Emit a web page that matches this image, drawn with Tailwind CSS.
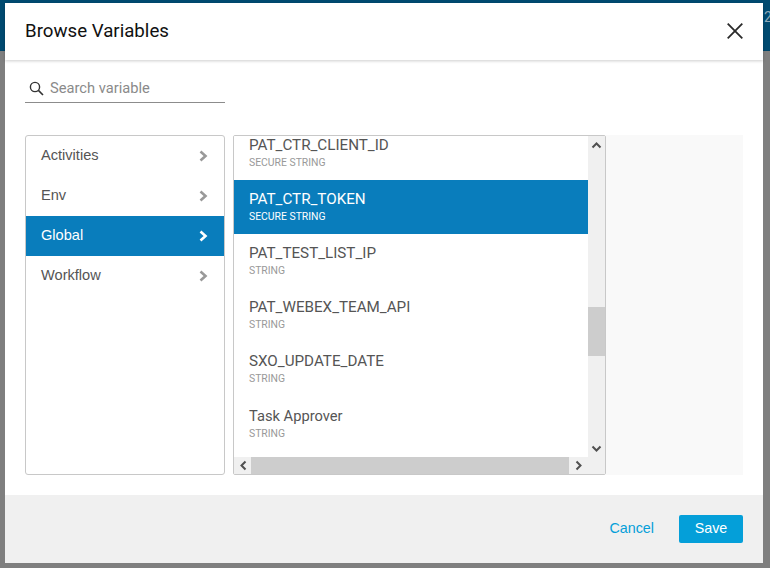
<!DOCTYPE html>
<html>
<head>
<meta charset="utf-8">
<script src="https://cdn.jsdelivr.net/npm/@tailwindcss/browser@4"></script>
</head>
<body class="w-[770px] h-[568px] overflow-hidden relative bg-[#7f7f7f] font-['Roboto',sans-serif]">
<div class="h-[51px] bg-[#004a70] border-b border-[#00466a]"></div>
<span class="absolute left-[764px] top-[9px] text-[14px] leading-[16px] text-[#8fa9b8]">2</span>
<div class="absolute left-[5px] top-[3px] w-[758px] h-[560px] bg-white flex flex-col">
  <header class="h-[57px] shrink-0 flex items-center justify-between pl-[20px] pr-[20px] shadow-[0_1px_3px_rgba(0,0,0,0.2)] relative z-10">
    <h1 class="text-[18.7px] leading-[24px] text-[#111] font-normal mt-[-2px]">Browse Variables</h1>
    <svg width="16" height="16" viewBox="0 0 16 16" class="mt-[-2px]"><path d="M0.7 0.7 L15.3 15.3 M15.3 0.7 L0.7 15.3" stroke="#2a2a2a" stroke-width="1.8" fill="none"/></svg>
  </header>
  <main class="flex-1 flex flex-col pl-[20px] pr-[20px]">
    <div class="w-[200px] h-[27px] mt-[16px] shrink-0 border-b border-[#8c8c8c] flex items-center gap-[5px] pl-[5px]">
      <svg width="15" height="15" viewBox="0 0 15 15" class="mt-[-2px] ml-[-1px] mr-[1px]"><circle cx="6" cy="6" r="4.6" stroke="#333" stroke-width="1.4" fill="none"/><path d="M9.4 9.4 L14 14" stroke="#333" stroke-width="1.6" fill="none"/></svg>
      <span class="text-[14.7px] leading-[20px] text-[#8a8a8a] mt-[-3px]">Search variable</span>
    </div>
    <div class="flex mt-[32px] h-[340px]">
      <nav class="w-[200px] border border-[#c8c8c8] rounded-[3px] overflow-hidden text-[14.6px] text-[#555] font-['Liberation_Sans',sans-serif]">
        <div class="h-[40px] flex items-center justify-between pl-[15px] pr-[16px]"><span class="mt-[-1px]">Activities</span><svg width="9" height="12" viewBox="0 0 9 12"><path d="M1.5 1.5 L6.5 6 L1.5 10.5" stroke="#999" stroke-width="2.6" fill="none"/></svg></div>
        <div class="h-[40px] flex items-center justify-between pl-[15px] pr-[16px]"><span class="mt-[-1px]">Env</span><svg width="9" height="12" viewBox="0 0 9 12"><path d="M1.5 1.5 L6.5 6 L1.5 10.5" stroke="#999" stroke-width="2.6" fill="none"/></svg></div>
        <div class="h-[40px] flex items-center justify-between pl-[15px] pr-[16px] bg-[#097dbc] text-white"><span class="mt-[-1px]">Global</span><svg width="9" height="12" viewBox="0 0 9 12"><path d="M1.5 1.5 L6.5 6 L1.5 10.5" stroke="#fff" stroke-width="2.6" fill="none"/></svg></div>
        <div class="h-[40px] flex items-center justify-between pl-[15px] pr-[16px]"><span class="mt-[-1px]">Workflow</span><svg width="9" height="12" viewBox="0 0 9 12"><path d="M1.5 1.5 L6.5 6 L1.5 10.5" stroke="#999" stroke-width="2.6" fill="none"/></svg></div>
      </nav>
      <div class="ml-[8px] w-[373px] border border-[#c8c8c8] rounded-[2px] grid grid-cols-[354px_17px] grid-rows-[321px_17px] overflow-hidden">
        <div class="overflow-hidden bg-white">
          <div class="mt-[-10.4px]">
            <div class="h-[54.2px] pl-[15px] pt-[10px] text-[#555]"><div class="text-[15.2px] leading-[18px]">PAT_CTR_CLIENT_ID</div><div class="text-[10.4px] leading-[12px] mt-[3px] text-[#999]">SECURE STRING</div></div>
            <div class="h-[54.2px] pl-[15px] pt-[10px] bg-[#097dbc] text-white"><div class="text-[15.2px] leading-[18px]">PAT_CTR_TOKEN</div><div class="text-[10.4px] leading-[12px] mt-[3px]">SECURE STRING</div></div>
            <div class="h-[54.2px] pl-[15px] pt-[10px] text-[#555]"><div class="text-[15.2px] leading-[18px]">PAT_TEST_LIST_IP</div><div class="text-[10.4px] leading-[12px] mt-[3px] text-[#999]">STRING</div></div>
            <div class="h-[54.2px] pl-[15px] pt-[10px] text-[#555]"><div class="text-[15.2px] leading-[18px]">PAT_WEBEX_TEAM_API</div><div class="text-[10.4px] leading-[12px] mt-[3px] text-[#999]">STRING</div></div>
            <div class="h-[54.2px] pl-[15px] pt-[10px] text-[#555]"><div class="text-[15.2px] leading-[18px]">SXO_UPDATE_DATE</div><div class="text-[10.4px] leading-[12px] mt-[3px] text-[#999]">STRING</div></div>
            <div class="h-[54.2px] pl-[15px] pt-[10px] text-[#555]"><div class="text-[14.7px] leading-[18px]">Task Approver</div><div class="text-[10.4px] leading-[12px] mt-[3px] text-[#999]">STRING</div></div>
          </div>
        </div>
        <div class="bg-[#f0f0f0] flex flex-col">
          <div class="h-[17px] flex items-center justify-center"><svg width="11" height="8" viewBox="0 0 11 8"><path d="M1.5 6.5 L5.5 2.5 L9.5 6.5" stroke="#505050" stroke-width="2" fill="none"/></svg></div>
          <div class="h-[154px]"></div>
          <div class="h-[49px] bg-[#cdcdcd]"></div>
          <div class="flex-1"></div>
          <div class="h-[17px] flex items-center justify-center"><svg width="11" height="8" viewBox="0 0 11 8"><path d="M1.5 1.5 L5.5 5.5 L9.5 1.5" stroke="#505050" stroke-width="2" fill="none"/></svg></div>
        </div>
        <div class="bg-[#f0f0f0] flex">
          <div class="w-[17px] flex items-center justify-center"><svg width="8" height="11" viewBox="0 0 8 11"><path d="M6.5 1.5 L2.5 5.5 L6.5 9.5" stroke="#505050" stroke-width="2" fill="none"/></svg></div>
          <div class="w-[318px] bg-[#cdcdcd]"></div>
          <div class="flex-1 flex items-center justify-center"><svg width="8" height="11" viewBox="0 0 8 11"><path d="M1.5 1.5 L5.5 5.5 L1.5 9.5" stroke="#505050" stroke-width="2" fill="none"/></svg></div>
        </div>
        <div class="bg-[#f0f0f0]"></div>
      </div>
      <aside class="flex-1 bg-[#f9f9f9]"></aside>
    </div>
  </main>
  <footer class="h-[68px] shrink-0 bg-[#f0f0f0] flex items-center justify-end pr-[20px] gap-[25px] font-['Liberation_Sans',sans-serif] text-[14.3px]">
    <span class="text-[#049fd9]">Cancel</span>
    <button class="w-[64px] h-[28px] bg-[#049fd9] text-white rounded-[2px] text-[14.3px]">Save</button>
  </footer>
</div>
</body>
</html>
